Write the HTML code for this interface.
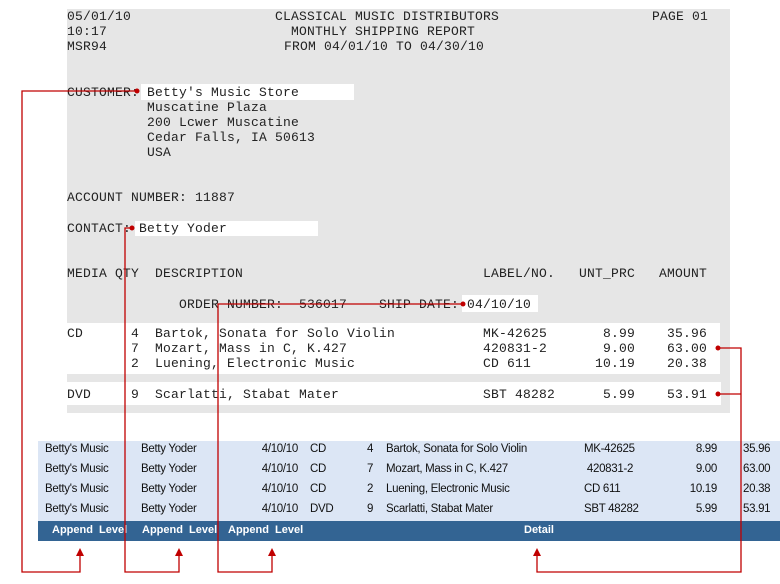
<!DOCTYPE html>
<html><head><meta charset="utf-8"><style>
body{margin:0;width:780px;height:584px;background:#fff;position:relative;overflow:hidden}
.m{position:absolute;font:13px/15px "Liberation Mono",monospace;letter-spacing:0.2px;color:#222;white-space:pre}
.b{position:absolute;background:#fff}
.t{position:absolute;font:11.5px/20px "Liberation Sans",sans-serif;color:#111;white-space:pre;letter-spacing:-0.3px}
.h{position:absolute;font:bold 11px/20px "Liberation Sans",sans-serif;color:#fff;white-space:pre}
.r{text-align:right}
</style></head><body>
<div style="position:absolute;left:67px;top:9px;width:663px;height:404px;background:#e6e6e6"></div>
<div class="b" style="left:141px;top:84px;width:213px;height:16px"></div>
<div class="b" style="left:135px;top:221px;width:183px;height:15px"></div>
<div class="b" style="left:462px;top:295px;width:76px;height:17px"></div>
<div class="b" style="left:67px;top:323px;width:653px;height:51px"></div>
<div class="b" style="left:67px;top:382px;width:654px;height:23px"></div>
<div class="m" style="left:67px;top:9px">05/01/10
10:17
MSR94</div>
<div class="m" style="left:275px;top:9px">CLASSICAL MUSIC DISTRIBUTORS</div>
<div class="m" style="left:291px;top:24px">MONTHLY SHIPPING REPORT</div>
<div class="m" style="left:284px;top:39px">FROM 04/01/10 TO 04/30/10</div>
<div class="m" style="left:652px;top:9px">PAGE 01</div>
<div class="m" style="left:67px;top:85px">CUSTOMER:</div>
<div class="m" style="left:147px;top:85px">Betty's Music Store
Muscatine Plaza
200 Lcwer Muscatine
Cedar Falls, IA 50613
USA</div>
<div class="m" style="left:67px;top:190px">ACCOUNT NUMBER: 11887</div>
<div class="m" style="left:67px;top:221px">CONTACT:</div>
<div class="m" style="left:139px;top:221px">Betty Yoder</div>
<div class="m" style="left:67px;top:266px">MEDIA</div>
<div class="m" style="left:115px;top:266px">QTY</div>
<div class="m" style="left:155px;top:266px">DESCRIPTION</div>
<div class="m" style="left:483px;top:266px">LABEL/NO.</div>
<div class="m" style="left:579px;top:266px">UNT_PRC</div>
<div class="m" style="left:659px;top:266px">AMOUNT</div>
<div class="m" style="left:179px;top:297px">ORDER NUMBER:</div>
<div class="m" style="left:299px;top:297px">536017</div>
<div class="m" style="left:379px;top:297px">SHIP DATE:</div>
<div class="m" style="left:467px;top:297px">04/10/10</div>
<div class="m" style="left:67px;top:326px">CD</div>
<div class="m" style="left:131px;top:326px">4
7
2</div>
<div class="m" style="left:155px;top:326px">Bartok, Sonata for Solo Violin
Mozart, Mass in C, K.427
Luening, Electronic Music</div>
<div class="m" style="left:483px;top:326px">MK-42625
420831-2
CD 611</div>
<div class="m r" style="left:574px;width:61px;top:326px">8.99
9.00
10.19</div>
<div class="m r" style="left:646px;width:61px;top:326px">35.96
63.00
20.38</div>
<div class="m" style="left:67px;top:387px">DVD</div>
<div class="m" style="left:131px;top:387px">9</div>
<div class="m" style="left:155px;top:387px">Scarlatti, Stabat Mater</div>
<div class="m" style="left:483px;top:387px">SBT 48282</div>
<div class="m r" style="left:574px;width:61px;top:387px">5.99</div>
<div class="m r" style="left:646px;width:61px;top:387px">53.91</div>
<div style="position:absolute;left:38px;top:441px;width:742px;height:80px;background:#dce6f5"></div>
<div style="position:absolute;left:38px;top:521px;width:742px;height:20px;background:#336493"></div>
<div class="t" style="left:45px;top:439px">Betty's Music
Betty's Music
Betty's Music
Betty's Music</div>
<div class="t" style="left:141px;top:439px">Betty Yoder
Betty Yoder
Betty Yoder
Betty Yoder</div>
<div class="t r" style="left:240px;width:58px;top:439px">4/10/10
4/10/10
4/10/10
4/10/10</div>
<div class="t" style="left:310px;top:439px">CD
CD
CD
DVD</div>
<div class="t" style="left:367px;top:439px">4
7
2
9</div>
<div class="t" style="left:386px;top:439px">Bartok, Sonata for Solo Violin
Mozart, Mass in C, K.427
Luening, Electronic Music
Scarlatti, Stabat Mater</div>
<div class="t" style="left:584px;top:439px">MK-42625
 420831-2
CD 611
SBT 48282</div>
<div class="t r" style="left:670px;width:47px;top:439px">8.99
9.00
10.19
5.99</div>
<div class="t" style="left:743px;top:439px">35.96
63.00
20.38
53.91</div>
<div class="h" style="left:52px;top:520px">Append  Level</div>
<div class="h" style="left:142px;top:520px">Append  Level</div>
<div class="h" style="left:228px;top:520px">Append  Level</div>
<div class="h" style="left:524px;top:520px">Detail</div>
<svg style="position:absolute;left:0;top:0" width="780" height="584" fill="none" stroke="#c00000" stroke-width="1.3">
<path d="M137 91H22V572H80V552"/>
<path d="M132 228H125V572H179V552"/>
<path d="M463 304H218V572H272V552"/>
<path d="M718 348H741V572H537V552"/><path d="M718 394H741"/>
<g fill="#c00000" stroke="none">
<circle cx="137" cy="91" r="2.5"/><circle cx="132" cy="228" r="2.5"/><circle cx="463" cy="304" r="2.5"/><circle cx="718" cy="348" r="2.5"/><circle cx="718" cy="394" r="2.5"/>
<path d="M76 556L80 548L84 556Z"/><path d="M175 556L179 548L183 556Z"/><path d="M268 556L272 548L276 556Z"/><path d="M533 556L537 548L541 556Z"/>
</g></svg>
</body></html>
